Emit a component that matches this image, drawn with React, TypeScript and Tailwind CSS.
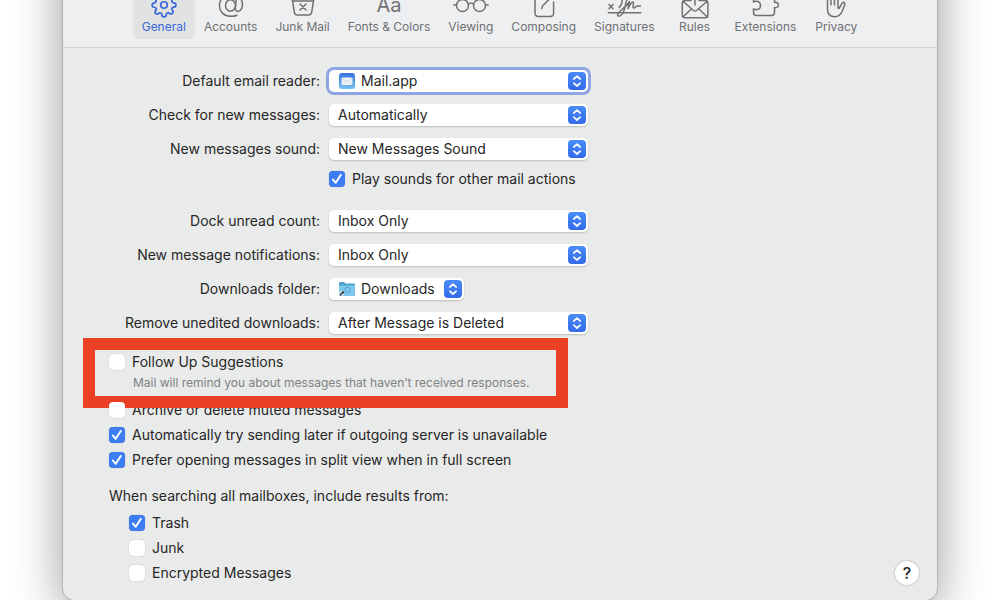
import React, { useState } from "react";
import { FiSettings } from "react-icons/fi";

interface Tab {
  name: string;
  icon: React.ReactNode;
}

// Toolbar glyphs share a 36x32 canvas
const Glyph: React.FC<{ children: React.ReactNode }> = ({ children }) => (
  <svg
    className="h-8 w-9"
    viewBox="0 0 36 32"
    fill="none"
    stroke="currentColor"
    strokeWidth="1.5"
    strokeLinecap="round"
    strokeLinejoin="round"
    aria-hidden="true"
  >
    {children}
  </svg>
);

const tabs: Tab[] = [
  {
    name: "General",
    icon: (
      <Glyph>
        <FiSettings x={5} y={4} size={26} strokeWidth={1.6} />
      </Glyph>
    ),
  },
  {
    name: "Accounts",
    icon: (
      <Glyph>
        <ellipse cx="17.5" cy="17.5" rx="5" ry="5.8" />
        <path d="M23.2 12l-.8 7.800c-.3 2.300.6 3.600 2.300 3.600 2.600 0 4.800-2.700 4.800-6.700C29.500 10.500 24.800 6.200 18.200 6.200 11.500 6.200 6.500 11 6.500 17.500s4.700 10.800 11.500 10.800c2.400 0 4.300-.4 5.800-1.100" />
      </Glyph>
    ),
  },
  {
    name: "Junk Mail",
    icon: (
      <Glyph>
        <path d="M5.500 9.500h25M7.500 13h21M7 9.500l2.300 14.700c.3 2 1.200 2.800 2.900 2.800h11.600c1.700 0 2.600-.8 2.900-2.800L29 9.500M15 16l6 6M21 16l-6 6" />
      </Glyph>
    ),
  },
  {
    name: "Fonts & Colors",
    icon: <span className="block h-8 pt-[3px] text-xl leading-7">Aa</span>,
  },
  {
    name: "Viewing",
    icon: (
      <Glyph>
        <circle cx="9.500" cy="17.500" r="6" />
        <circle cx="26.500" cy="17.500" r="6" />
        <path d="M3.500 17H.8M32.500 17h2.700M15.300 16.300c1.500-1.400 3.900-1.400 5.400 0" />
      </Glyph>
    ),
  },
  {
    name: "Composing",
    icon: (
      <Glyph>
        <path d="M22 9.500H12.500C10 9.500 9 10.500 9 13v12c0 2.500 1 3.500 3.500 3.500h11.600c2.500 0 3.500-1 3.500-3.500V14M15.700 20.500l1-2.800L28 6.500" />
      </Glyph>
    ),
  },
  {
    name: "Signatures",
    icon: (
      <Glyph>
        <path d="M2.300 24.700h32.500M3 16.500l4 4.200M7 16.500l-4 4.200" />
        <path d="M9.500 11.500c2.500-2 6-2 6.500.5.500 2.500-1 5.500-3 7.500M21.500 10c-2 5-2.500 11-4.500 15-1.500 3-5 4-5.500 2-.5-3 8-7.500 11-12 .5-.8 1-1.500 1-1.500l-1.500 7c1.500-3 3-6.500 5-6.500 1.500 0-1 5.500.5 6s2-2 4-2h3" />
      </Glyph>
    ),
  },
  {
    name: "Rules",
    icon: (
      <Glyph>
        <path d="M14 12.500H8c-1.800 0-2.700.8-2.700 2.500v12.200c0 1.700.9 2.500 2.700 2.500h20.200c1.800 0 2.700-.8 2.700-2.500V15c0-1.700-.9-2.500-2.700-2.500H22M6 13.300l10.500 9.200c1 .8 2 .8 3 0L30.200 13.300M6 29l8-7.800M30.200 29l-8-7.800M18 17V6" />
      </Glyph>
    ),
  },
  {
    name: "Extensions",
    icon: (
      <Glyph>
        <path d="M6.500 14v-3.500h7.700V8c0-4 7.600-4 7.600 0v2.500h5.700v4c5-1.600 5.500 6.200 0 5V24.500c0 2-.8 3-3 3h-15c-2.200 0-3-1-3-3v-3.700c2.500 1.300 7 1.200 7-3.400S9 12.700 6.500 14z" />
      </Glyph>
    ),
  },
  {
    name: "Privacy",
    icon: (
      <Glyph>
        <path d="M9.500 18.500V8M13 17V5.500M16.500 17V4.500M20 17.500V6M9.500 8c0-2 3.500-2 3.500 0M13 5.500c0-2 3.500-2 3.500-.5M16.500 6c0-2 3.500-2 3.500.5M9.500 18v3.300c0 5 2.700 7.400 7.200 7.400 4 0 6-2 7.500-5.500l2.500-6.500c.8-2.200-1.700-3.200-2.800-1.200L21.300 20c-.5.8-1.300.5-1.300-.5v-2" />
      </Glyph>
    ),
  },
];

const MailIcon = () => (
  <svg className="h-4 w-4" viewBox="0 0 16 16" aria-hidden="true">
    <defs>
      <linearGradient id="mail" x1="0" y1="0" x2="0" y2="1">
        <stop offset="0" stopColor="#3a70dc" />
        <stop offset="1" stopColor="#72c3f3" />
      </linearGradient>
    </defs>
    <rect width="16" height="16" rx="3" fill="url(#mail)" />
    <rect x="2.500" y="4.500" width="11" height="7.500" rx="1" fill="#eef3f7" />
    <path d="M3 5l5 4 5-4M3 11.500l3-3M13 11.500l-3-3" fill="none" stroke="#b9c8d4" strokeWidth=".7" />
  </svg>
);

const FolderIcon = () => (
  <svg className="h-4 w-4" viewBox="0 0 16 16" aria-hidden="true">
    <path d="M0 2c0-.7.400-1 1-1h4l1.500 1.500H15c.6 0 1 .4 1 1V14c0 .6-.4 1-1 1H1c-.6 0-1-.4-1-1z" fill="#4fa3cf" />
    <path d="M0 4.500h16V14c0 .6-.4 1-1 1H1c-.6 0-1-.4-1-1z" fill="#7cc6ec" />
    <circle cx="8.500" cy="8.800" r="2.600" fill="none" stroke="#58a8d4" />
    <path d="M0 10h5v5H1c-.6 0-1-.4-1-1z" fill="#b9d6e4" />
    <path d="M1 14.500c0-1.500.8-2.500 2-3V10.500l2 0v2l-.8-.4c-1.200.4-1.700 1.200-2 2.400z" fill="#222" />
  </svg>
);

interface PopUpProps {
  id: string;
  label: string;
  options: string[];
  icon?: React.ReactNode;
  focused?: boolean;
  width?: string;
}

const PopUp: React.FC<PopUpProps> = ({ id, label, options, icon, focused, width = "w-[259px]" }) => {
  const [value, setValue] = useState(options[0]);

  return (
    <>
      <label htmlFor={id} className="pb-px text-right">
        {label}
      </label>
      <div
        className={`relative h-[22px] rounded-[5px] bg-white ${width} ${
          focused ? "ring-3 ring-[#8fa5e3]" : "shadow-[0_1px_2px_rgba(0,0,0,0.2)]"
        }`}
      >
        {icon && <span className="absolute top-[3px] left-[10px]">{icon}</span>}
        <select
          id={id}
          value={value}
          onChange={(e) => setValue(e.target.value)}
          className={`block h-full w-full appearance-none rounded-[5px] bg-transparent pr-6 pb-px outline-none ${
            icon ? "pl-8" : "pl-[9px]"
          }`}
        >
          {options.map((option) => (
            <option key={option}>{option}</option>
          ))}
        </select>
        <svg
          className="pointer-events-none absolute top-[2px] right-[2px] h-[18px] w-[18px] rounded bg-linear-to-b from-[#4b8cf7] to-[#326ae8]"
          viewBox="0 0 18 18"
          fill="none"
          stroke="#fff"
          strokeWidth="1.7"
          strokeLinecap="round"
          strokeLinejoin="round"
          aria-hidden="true"
        >
          <path d="M5.800 7L9 4.200 12.200 7M5.800 11.200L9 14l3.200-2.800" />
        </svg>
      </div>
    </>
  );
};

const CheckBox: React.FC<{ label: string; checked?: boolean }> = ({ label, checked = false }) => {
  const [on, setOn] = useState(checked);

  return (
    <label className="flex h-[25px] items-center gap-[7px]">
      <span className="relative h-4 w-4">
        <input
          type="checkbox"
          checked={on}
          onChange={() => setOn(!on)}
          className="peer block h-4 w-4 appearance-none rounded bg-white shadow-[0_0_1px_rgba(0,0,0,0.4)] checked:bg-[#3c7df3]"
        />
        <svg
          className="pointer-events-none absolute inset-0 hidden h-4 w-4 peer-checked:block"
          viewBox="0 0 16 16"
          fill="none"
          stroke="#fff"
          strokeWidth="2"
          strokeLinecap="round"
          strokeLinejoin="round"
          aria-hidden="true"
        >
          <path d="M4 8.600l2.700 3.200L11.800 4" />
        </svg>
      </span>
      {label}
    </label>
  );
};

const App: React.FC = () => {
  const [active, setActive] = useState("General");

  return (
    <div className="min-h-screen overflow-hidden bg-white px-[63px] font-['Inter','Liberation_Sans',sans-serif] text-sm text-[#262626]">
      {/* The window starts above the visible page */}
      <div className="-mt-20 flex min-h-[calc(100vh+80px)] flex-col rounded-b-xl bg-[#e9ebea] shadow-[0_0_1px_1px_rgba(0,0,0,0.15),0_12px_50px_rgba(0,0,0,0.4)]">
        <header className="flex h-32 items-end justify-center border-b border-[#d3d4d7] bg-[#eeeff1] pb-2">
          {tabs.map((tab) => (
            <button
              key={tab.name}
              type="button"
              onClick={() => setActive(tab.name)}
              className={`flex min-w-[62px] flex-col items-center rounded-md px-[9px] pt-2 pb-1 text-xs whitespace-nowrap ${
                active === tab.name ? "bg-[#e1e3e3] text-[#3b68d8]" : "text-[#707173]"
              }`}
            >
              <span className="-mb-px">{tab.icon}</span>
              <span>{tab.name}</span>
            </button>
          ))}
        </header>

        <main className="flex grow flex-col px-[46px] pt-[22px]">
          <section className="grid grid-cols-[211px_1fr] items-center gap-x-[9px] gap-y-3">
            <PopUp id="reader" label="Default email reader:" options={["Mail.app"]} icon={<MailIcon />} focused />
            <PopUp id="check" label="Check for new messages:" options={["Automatically", "Manually"]} />
            <PopUp id="sound" label="New messages sound:" options={["New Messages Sound", "None"]} />
            <div className="col-start-2 -mt-[6px]">
              <CheckBox label="Play sounds for other mail actions" checked />
            </div>
          </section>

          <section className="mt-[19px] grid grid-cols-[211px_1fr] items-center gap-x-[9px] gap-y-3">
            <PopUp id="dock" label="Dock unread count:" options={["Inbox Only", "All Mailboxes"]} />
            <PopUp id="notify" label="New message notifications:" options={["Inbox Only", "All Mailboxes"]} />
            <PopUp
              id="folder"
              label="Downloads folder:"
              options={["Downloads"]}
              icon={<FolderIcon />}
              width="w-[135px]"
            />
            <PopUp
              id="remove"
              label="Remove unedited downloads:"
              options={["After Message is Deleted", "When Mail Quits", "Never"]}
            />
          </section>

          <section className="mt-[15px]">
            <div className="relative">
              <CheckBox label="Follow Up Suggestions" />
              <p className="pb-[14px] pl-6 text-xs leading-[18px] text-[#808182]">
                Mail will remind you about messages that haven’t received responses.
              </p>
              {/* Highlight frame over the option */}
              <div className="pointer-events-none absolute -top-[11px] -left-[26px] h-[70px] w-[485px] border-12 border-[#eb4025]" />
            </div>
            <div className="-mt-[9px]">
              <CheckBox label="Archive or delete muted messages" />
            </div>
            <CheckBox label="Automatically try sending later if outgoing server is unavailable" checked />
            <CheckBox label="Prefer opening messages in split view when in full screen" checked />
          </section>

          <section className="mt-[11px]">
            <h2 className="leading-[25px]">When searching all mailboxes, include results from:</h2>
            <div className="mt-[2px] flex items-end justify-between">
              <div className="pl-5">
                <CheckBox label="Trash" checked />
                <CheckBox label="Junk" />
                <CheckBox label="Encrypted Messages" />
              </div>
              <button
                type="button"
                aria-label="Help"
                className="-mr-[28px] h-6 w-6 rounded-full bg-white text-base leading-6 font-medium shadow-[0_0_2px_rgba(0,0,0,0.35)]"
              >
                ?
              </button>
            </div>
          </section>
        </main>
      </div>
    </div>
  );
};

export default App;
